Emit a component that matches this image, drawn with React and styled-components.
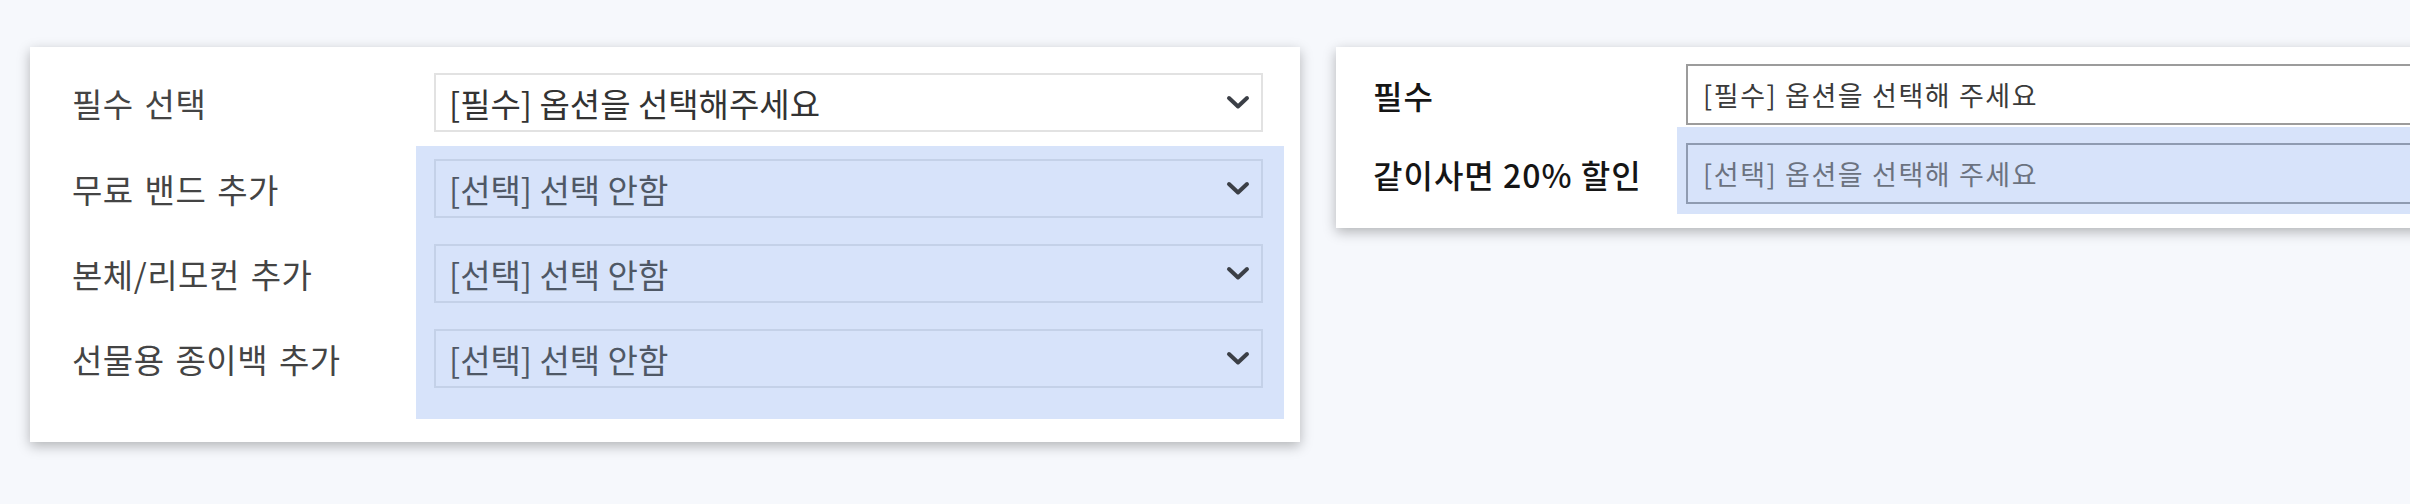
import React from 'react';
import styled, { createGlobalStyle } from 'styled-components';

const GlobalStyle = createGlobalStyle`
  html, body {
    margin: 0;
    padding: 0;
    background: #f6f8fc;
    overflow: hidden;
  }
  body {
    font-family: "Noto Sans CJK KR", "Noto Sans", sans-serif;
  }
`;

const Page = styled.div`
  display: flex;
  align-items: flex-start;
  gap: 36px;
  padding: 47px 0 0 30px;
  width: 2410px;
  height: 504px;
  box-sizing: border-box;
  overflow: hidden;
`;

const Card = styled.div`
  flex: 0 0 auto;
  box-sizing: border-box;
  width: ${(p) => p.$width}px;
  background: #fff;
  box-shadow: 0 4px 12px rgba(0, 0, 0, 0.28);
  padding: ${(p) => p.$padding};
`;

const Row = styled.div`
  display: flex;
  margin-bottom: ${(p) => p.$gapBelow || 0}px;
`;

const LabelCol = styled.div`
  flex: 0 0 ${(p) => p.$width}px;
  display: flex;
  flex-direction: column;
  gap: ${(p) => p.$gap || 0}px;
  padding: ${(p) => p.$pad || '0'};
`;

const Label = styled.div`
  height: ${(p) => p.$h}px;
  display: flex;
  align-items: center;
  font-size: ${(p) => p.$size}px;
  letter-spacing: ${(p) => p.$spacing || 0}px;
  word-spacing: ${(p) => p.$wordSpacing || 0}px;
  color: ${(p) => p.$color};
  font-weight: ${(p) => p.$weight || 400};
  white-space: nowrap;
`;

const FieldCol = styled.div`
  flex: 1 1 auto;
  display: flex;
  flex-direction: column;
  gap: ${(p) => p.$gap || 0}px;
  padding: ${(p) => p.$pad || '0'};
  background: ${(p) => (p.$blue ? '#d7e3fa' : 'transparent')};
`;

const SelectBox = styled.div`
  box-sizing: border-box;
  height: ${(p) => p.$h}px;
  display: flex;
  align-items: center;
  justify-content: space-between;
  padding: 0 10px 0 ${(p) => p.$padLeft}px;
  border: ${(p) => p.$border};
  background: ${(p) => (p.$blue ? '#d7e3fa' : '#fff')};
  font-size: ${(p) => p.$size}px;
  letter-spacing: ${(p) => p.$spacing || 0}px;
  color: ${(p) => p.$color};
  white-space: nowrap;
`;

const Chevron = () => (
  <svg width="26" height="16" viewBox="0 0 26 16">
    <polyline points="4,3 13,11.5 22,3" fill="none" stroke="#3b3f46" strokeWidth="4" strokeLinecap="round" strokeLinejoin="round" />
  </svg>
);

const leftOptions = ['무료 밴드 추가', '본체/리모컨 추가', '선물용 종이백 추가'];

const App = () => (
  <>
    <GlobalStyle />
    <Page>
      <Card $width={1270} $padding="26px 16px 23px 42px">
        <Row $gapBelow={14}>
          <LabelCol $width={344}>
            <Label $h={59} $size={33} $spacing={0.5} $wordSpacing={3} $color="#444">필수 선택</Label>
          </LabelCol>
          <FieldCol $pad="0 21px 0 18px">
            <SelectBox $h={59} $padLeft={13} $size={33} $color="#333" $border="2px solid #e2e2e2">
              [필수] 옵션을 선택해주세요
              <Chevron />
            </SelectBox>
          </FieldCol>
        </Row>
        <Row>
          <LabelCol $width={344} $gap={26} $pad="13px 0 31px 0">
            {leftOptions.map((name) => (
              <Label key={name} $h={59} $size={33} $spacing={0.5} $wordSpacing={3} $color="#444">{name}</Label>
            ))}
          </LabelCol>
          <FieldCol $blue $gap={26} $pad="13px 21px 31px 18px">
            {leftOptions.map((name) => (
              <SelectBox key={name} $blue $h={59} $padLeft={13} $size={33} $color="#4f5866" $border="2px solid #c4d1e8">
                [선택] 선택 안함
                <Chevron />
              </SelectBox>
            ))}
          </FieldCol>
        </Row>
      </Card>

      <Card $width={1400} $padding="17px 0 14px 37px">
        <Row $gapBelow={2}>
          <LabelCol $width={304}>
            <Label $h={61} $size={32} $spacing={1} $color="#151515" $weight={500}>필수</Label>
          </LabelCol>
          <FieldCol $pad="0 0 0 9px">
            <SelectBox $h={61} $padLeft={15} $size={27} $spacing={1.6} $color="#3a3a3a" $border="2px solid #9c9c9c">
              [필수] 옵션을 선택해 주세요
            </SelectBox>
          </FieldCol>
        </Row>
        <Row>
          <LabelCol $width={304} $pad="16px 0 10px 0">
            <Label $h={61} $size={32} $spacing={1} $color="#151515" $weight={500}>같이사면 20% 할인</Label>
          </LabelCol>
          <FieldCol $blue $pad="16px 0 10px 9px">
            <SelectBox $blue $h={61} $padLeft={15} $size={27} $spacing={1.6} $color="#6b7280" $border="2px solid #8f9bb1">
              [선택] 옵션을 선택해 주세요
            </SelectBox>
          </FieldCol>
        </Row>
      </Card>
    </Page>
  </>
);

export default App;
